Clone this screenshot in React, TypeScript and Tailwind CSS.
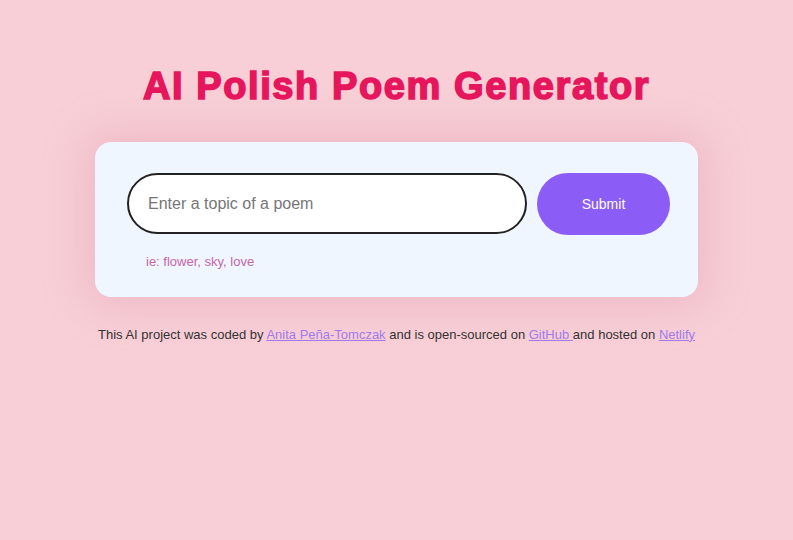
export default function App() {
  return (
    <div
      className="min-h-screen bg-[#f8cfd7] pt-[62px] text-center"
      style={{ fontFamily: '"Liberation Sans", Arial, sans-serif' }}
    >
      <h1 className="text-[38px] leading-[48px] font-bold text-[#e6165c] [-webkit-text-stroke:1.6px_#e6165c] tracking-[1.6px]">
        AI Polish Poem Generator
      </h1>

      <div className="mx-auto mt-[32px] w-[603px] rounded-2xl bg-[#eff6ff] pl-[32px] pr-[28px] pt-[31px] pb-[25px] text-left shadow-[0_0_40px_10px_rgba(220,150,165,0.35)]">
        <form className="flex gap-[10px]" onSubmit={(e) => e.preventDefault()}>
          <input
            type="text"
            placeholder="Enter a topic of a poem"
            className="h-[61px] w-[400px] rounded-full border-2 border-[#222] bg-white px-[19px] text-[16px] text-[#333] placeholder:text-[#767676] outline-none"
          />
          <button
            type="submit"
            className="h-[62px] w-[133px] rounded-full bg-[#8b5cf6] text-[14px] text-white"
          >
            Submit
          </button>
        </form>
        <p className="mt-[17px] pl-[19px] text-[13px] text-[#c865a8]">ie: flower, sky, love</p>
      </div>

      <p className="mt-[28px] text-[13px] text-[#333]">
        This AI project was coded by{' '}
        <a href="#" className="text-[#9f7aea] underline">
          Anita Peña-Tomczak
        </a>{' '}
        and is open-sourced on{' '}
        <a href="#" className="text-[#9f7aea] underline">
          GitHub{' '}
        </a>
        and hosted on{' '}
        <a href="#" className="text-[#9f7aea] underline">
          Netlify
        </a>
      </p>
    </div>
  );
}
